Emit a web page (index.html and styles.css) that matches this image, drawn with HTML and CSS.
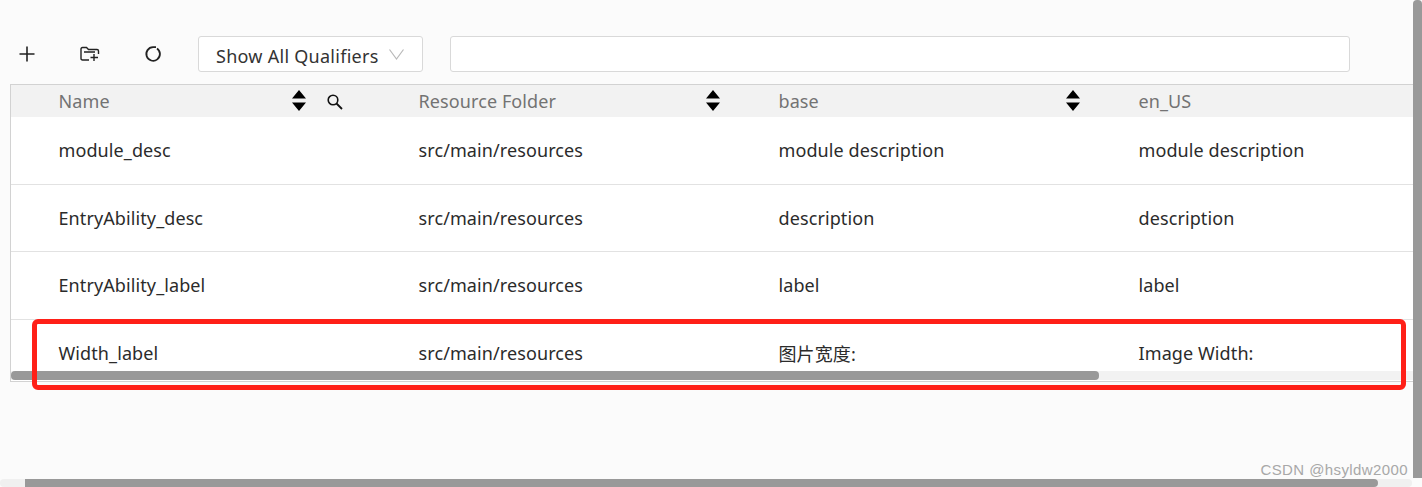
FILE: index.html
```html
<!DOCTYPE html>
<html lang="en">
<head>
<meta charset="utf-8">
<title>Resources</title>
<link rel="stylesheet" href="styles.css">
</head>
<body>
<div class="page">
  <div class="toolbar">
    <button class="tool tool-add" aria-label="Add">
      <svg width="16" height="16" viewBox="0 0 16 16"><path d="M8 .5v15M.5 8h15" fill="none" stroke="#222" stroke-width="1.6"/></svg>
    </button>
    <button class="tool tool-folder" aria-label="New folder">
      <svg width="20" height="16" viewBox="0 0 20 16"><path d="M9 14H2.500Q1 14 1 12.500V3Q1 1.500 2.500 1.500H6.500L8.500 3.500H17Q18.500 3.500 18.500 5V8M4 6H15M14 8V15M10.500 11.500H18" fill="none" stroke="#222" stroke-width="1.400"/></svg>
    </button>
    <button class="tool tool-refresh" aria-label="Refresh">
      <svg width="18" height="18" viewBox="0 0 18 18"><path d="M13 3.400A6.800 6.800 0 1 1 9 2.200H12" fill="none" stroke="#222" stroke-width="1.800"/></svg>
    </button>
    <div class="select">
      <span>Show All Qualifiers</span>
      <svg width="15" height="11" viewBox="0 0 15 11"><path d="M.5 .5L7.500 10L14.500 .5" fill="none" stroke="#b9b9b9" stroke-width="1.200"/></svg>
    </div>
    <input class="search" type="text" aria-label="Search">
  </div>

  <div class="table">
    <div class="row head">
      <div class="cell">
        <span class="label">Name</span>
        <svg class="sort sort-first" width="14" height="21" viewBox="0 0 14 21"><path d="M7 0L14 8.500H0ZM0 12.500H14L7 21Z" fill="#000"/></svg>
        <svg class="find" width="17" height="17" viewBox="0 0 17 17"><circle cx="7" cy="7" r="4.800" fill="none" stroke="#111" stroke-width="1.600"/><path d="M10.500 10.500L16 16" stroke="#111" stroke-width="1.800"/></svg>
      </div>
      <div class="cell">
        <span class="label">Resource Folder</span>
        <svg class="sort" width="14" height="21" viewBox="0 0 14 21"><path d="M7 0L14 8.500H0ZM0 12.500H14L7 21Z" fill="#000"/></svg>
      </div>
      <div class="cell">
        <span class="label">base</span>
        <svg class="sort" width="14" height="21" viewBox="0 0 14 21"><path d="M7 0L14 8.500H0ZM0 12.500H14L7 21Z" fill="#000"/></svg>
      </div>
      <div class="cell"><span class="label">en_US</span></div>
    </div>
    <div class="row body">
      <div class="cell">module_desc</div>
      <div class="cell">src/main/resources</div>
      <div class="cell">module description</div>
      <div class="cell">module description</div>
    </div>
    <div class="row body">
      <div class="cell">EntryAbility_desc</div>
      <div class="cell">src/main/resources</div>
      <div class="cell">description</div>
      <div class="cell">description</div>
    </div>
    <div class="row body">
      <div class="cell">EntryAbility_label</div>
      <div class="cell">src/main/resources</div>
      <div class="cell">label</div>
      <div class="cell">label</div>
    </div>
    <div class="row body last">
      <div class="cell">Width_label</div>
      <div class="cell">src/main/resources</div>
      <div class="cell">图片宽度:</div>
      <div class="cell">Image Width:</div>
    </div>
    <div class="table-scroll"><div class="table-thumb"></div></div>
  </div>

  <div class="highlight"></div>
  <div class="vbar"></div>
  <div class="hbar"><div class="hthumb"></div></div>
  <div class="watermark">CSDN @hsyldw2000</div>
</div>
</body>
</html>
```
FILE: styles.css
```css
* { box-sizing: border-box; }
html, body { margin: 0; padding: 0; height: 100%; overflow: hidden; }
body { background: #fbfbfb; color: #222; font-family: "Noto Sans", "Noto Sans CJK SC", sans-serif; font-size: 18px; }
.page { position: relative; width: 1422px; height: 487px; overflow: hidden; padding: 36px 0 0 10px; }

.toolbar { display: flex; align-items: flex-start; height: 48px; }
.tool { border: 0; background: none; padding: 0; display: flex; align-items: center; justify-content: center; height: 36px; }
.tool svg { display: block; }
.tool-add { width: 34px; }
.tool-folder { width: 20px; margin-left: 36px; }
.tool-refresh { width: 18px; margin-left: 44px; }
.select { margin-left: 36px; width: 225px; height: 36px; background: #fff; border: 1px solid #d9d9d9; border-radius: 3px; display: flex; align-items: center; padding: 4px 0 0 17px; gap: 10px; color: #333; letter-spacing: .27px; white-space: nowrap; }
.select svg { margin-top: -4px; }
.search { margin-left: 27px; width: 900px; height: 36px; background: #fff; border: 1px solid #d9d9d9; border-radius: 3px; }

.table { position: relative; width: 1412px; height: 298px; border: 1px solid #d2d2d2; border-right: 0; background: #fff; overflow: hidden; letter-spacing: .1px; }
.row { display: grid; grid-template-columns: repeat(4, 360px); padding-left: 47.500px; }
.cell { display: flex; align-items: center; white-space: nowrap; position: relative; }
.head { height: 32px; background: #f2f2f2; color: #737373; }
.body { height: 67.500px; border-bottom: 1px solid #e2e2e2; color: #2b2b2b; }
.body.last { border-bottom: 0; }
.label { flex: none; }
.sort { position: absolute; left: 287px; top: 5px; }
.sort-first { left: 233px; }
.find { position: absolute; left: 267px; top: 8px; }

.table-scroll { position: absolute; left: 0; right: 0; bottom: 1px; height: 9px; background: #f2f2f2; }
.table-thumb { width: 1088px; height: 100%; background: #999; border-radius: 4px; }

.highlight { position: absolute; left: 32px; top: 319px; width: 1374px; height: 71px; border: 5px solid #ff2018; border-radius: 6px; }
.vbar { position: absolute; right: 0; top: 0; width: 9px; height: 478px; background: #999; border-radius: 4px 4px 0 0; }
.hbar { position: absolute; left: 0; bottom: 0; width: 1412px; height: 8px; background: #f0f0f0; border-radius: 4px; }
.hthumb { margin-left: 25px; width: 1353px; height: 100%; background: #999; border-radius: 0 4px 4px 0; }
.watermark { position: absolute; right: 14px; top: 461px; font-family: "Liberation Sans", sans-serif; font-size: 15px; letter-spacing: .4px; color: #a8a8a8; white-space: nowrap; }
```
